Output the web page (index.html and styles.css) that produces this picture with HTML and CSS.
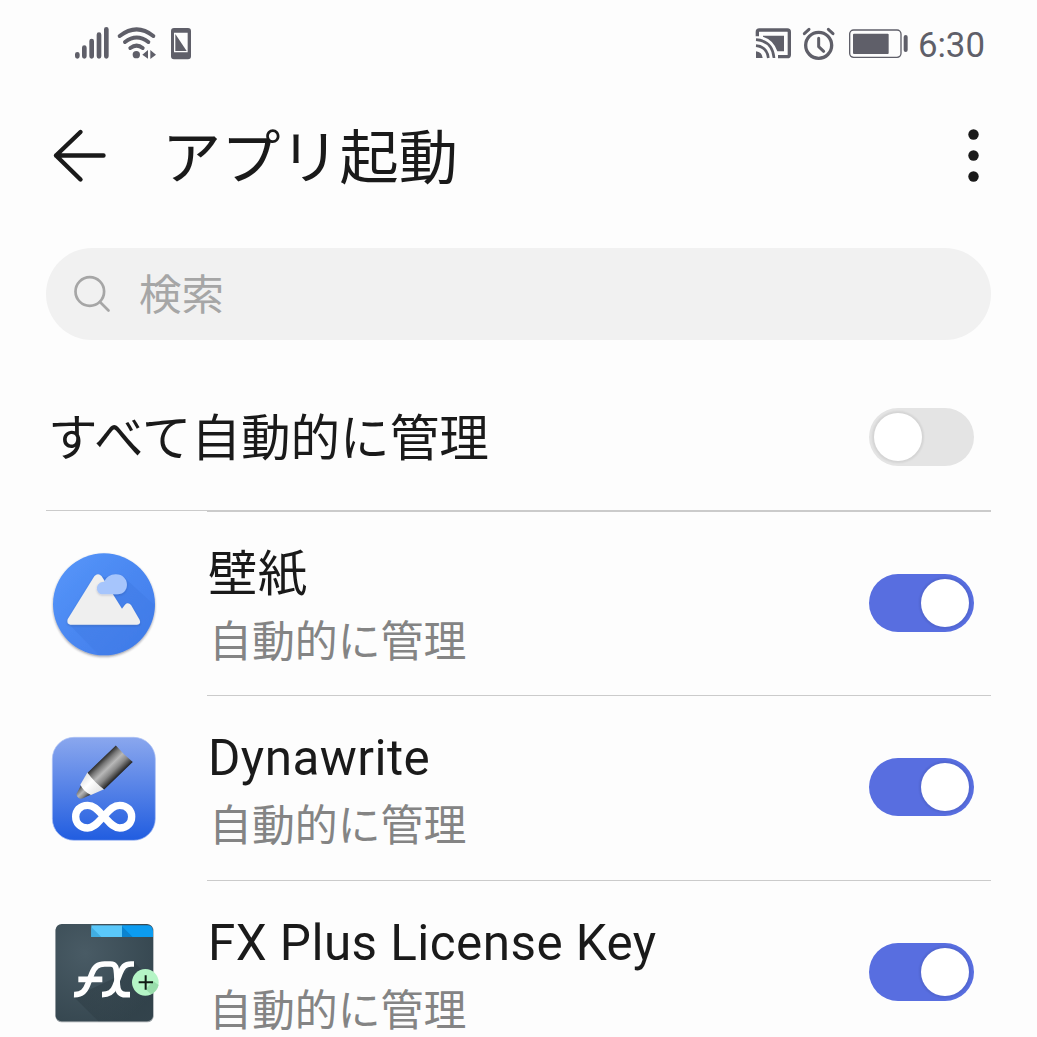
FILE: index.html
```html
<!DOCTYPE html>
<html lang="ja">
<head>
<meta charset="utf-8">
<title>アプリ起動</title>
<link rel="stylesheet" href="styles.css">
</head>
<body>
<div class="screen">
  <div class="status">
    <svg class="status-left" viewBox="0 0 450 180" fill="none" stroke="#5f5f69" stroke-linecap="round">
      <path stroke-width="14" d="M52 118v6M73 98v26M95 78v46M117 59v65M139 43v81"/>
      <path stroke-width="12" d="M179 63Q230 23 280 63M195 81Q230 54 265 81M211 99Q230 85 248 99"/>
      <circle cx="229" cy="119" r="11" fill="#5f5f69" stroke="none"/>
      <path fill="#5f5f69" stroke="none" d="M247 119l17-14v26zM271 105l17 14-17 13z"/>
      <path fill="#5f5f69" stroke="none" fill-rule="evenodd" d="M342 39h42q9 0 9 9v76q0 9-9 9h-42q-9 0-9-9V48q0-9 9-9zM342 53v59h41V53z"/>
      <path fill="#5f5f69" stroke="none" d="M346 57l34 51h-34z"/>
    </svg>
    <div class="status-right">
      <svg class="status-icons" viewBox="0 0 495 180" fill="none" stroke="#5f5f69">
        <path stroke-width="10" d="M40 64V51q0-6 6-6h84q6 0 6 6v68q0 6-6 6h-28"/>
        <path fill="#5f5f69" stroke="none" d="M57 62h63v47h-20Q89 75 57 65z"/>
        <path stroke-width="8" d="M36 74q50 4 54 55M36 92q33 3 37 37"/>
        <path fill="#5f5f69" stroke="none" d="M36 109q18 2 20 20H36z"/>
        <circle cx="224" cy="91" r="39" stroke-width="10"/>
        <path stroke-width="9" stroke-linecap="round" stroke-linejoin="round" d="M224 70v25l15 14M181 56l14-13M253 43l14 13"/>
        <rect x="317" y="45" width="154" height="82" rx="12" stroke-width="4"/>
        <rect x="327" y="56" width="107" height="61" rx="3" fill="#5f5f69" stroke="none"/>
        <path stroke-width="12" stroke-linecap="round" d="M485 66v39"/>
      </svg>
      <span class="clock">6:30</span>
    </div>
  </div>

  <header class="header">
    <svg class="back" viewBox="0 0 56 56" fill="none" stroke="#1a1a1a" stroke-width="4.4" stroke-linecap="round" stroke-linejoin="round"><path d="M52.500 27.500H5M29.500 4L5 27.500l24.500 24"/></svg>
    <h1 class="title">アプリ起動</h1>
    <svg class="more" viewBox="0 0 12 54" fill="#1a1a1a"><circle cx="5.500" cy="5.500" r="5.200"/><circle cx="5.500" cy="26.500" r="5.200"/><circle cx="5.500" cy="47.500" r="5.200"/></svg>
  </header>

  <div class="search">
    <svg class="glass" viewBox="0 0 40 40" fill="none" stroke="#a6a6a6" stroke-width="2.700" stroke-linecap="round"><circle cx="16.800" cy="17.500" r="14.300"/><path d="M27 28l8.500 8.500"/></svg>
    <span class="placeholder">検索</span>
  </div>

  <div class="all">
    <span class="all-label">すべて自動的に管理</span>
    <span class="switch"><span class="knob"></span></span>
  </div>

  <div class="list">
    <div class="row">
      <svg class="app" viewBox="0 0 390 390">
        <defs>
          <linearGradient id="sky" x1="0" y1="0" x2="1" y2="1"><stop offset="0" stop-color="#5797fa"/><stop offset=".5" stop-color="#4a87f1"/><stop offset="1" stop-color="#3f7bea"/></linearGradient>
          <linearGradient id="shade" x1="0" y1="0" x2="1" y2="1"><stop offset="0" stop-color="#2b62c9" stop-opacity=".25"/><stop offset="1" stop-color="#2b62c9" stop-opacity="0"/></linearGradient>
          <filter id="drop" x="-20%" y="-20%" width="140%" height="140%"><feDropShadow dx="0" dy="4" stdDeviation="3" flood-color="#223" flood-opacity=".45"/></filter>
          <filter id="soft" x="-20%" y="-20%" width="140%" height="140%"><feDropShadow dx="0" dy="3" stdDeviation="3" flood-color="#223" flood-opacity=".2"/></filter>
          <clipPath id="disc"><circle cx="192" cy="193" r="153"/></clipPath>
        </defs>
        <circle cx="192" cy="193" r="153" fill="url(#sky)" filter="url(#drop)"/>
        <g clip-path="url(#disc)"><path fill="url(#shade)" d="M84 250L220 390H400V246L252 112 170 110z"/></g>
        <path fill="#efefef" filter="url(#soft)" d="M163 109q11-13 22 0l61 97 9-12q9-9 18 1l26 45q5 13-8 14H91q-12-2-8-16z"/>
        <path fill="#a6c5fc" filter="url(#soft)" d="M188 163c-24-2-23-38 5-38 6-13 18-22 34-22 44 0 45 60 5 60z"/>
      </svg>
      <div class="texts"><span class="name">壁紙</span><span class="mode">自動的に管理</span></div>
      <span class="switch on"><span class="knob"></span></span>
    </div>

    <div class="row">
      <svg class="app" viewBox="0 0 390 390">
        <defs>
          <linearGradient id="tile" x1="0" y1="0" x2="0" y2="1"><stop offset="0" stop-color="#8aa7ee"/><stop offset="1" stop-color="#215de0"/></linearGradient>
          <linearGradient id="metal" x1="0" y1="0" x2="0" y2="1"><stop offset="0" stop-color="#2c2c2c"/><stop offset=".2" stop-color="#777"/><stop offset=".45" stop-color="#b8b8b8"/><stop offset=".7" stop-color="#888"/><stop offset="1" stop-color="#222"/></linearGradient>
          <linearGradient id="wood" x1="0" y1="0" x2="0" y2="1"><stop offset="0" stop-color="#e2e2e2"/><stop offset=".4" stop-color="#fff"/><stop offset="1" stop-color="#e2e2e2"/></linearGradient>
        </defs>
        <rect x="37" y="37" width="309" height="309" rx="65" fill="url(#tile)" stroke="#a9bff3" stroke-opacity=".7" stroke-width="3"/>
        <g transform="translate(118 217) rotate(-44)">
          <path fill="url(#metal)" d="M0-13Q-8 4 6 10l27 9v-43z"/>
          <path fill="url(#wood)" d="M28-25L70-37V34L30 19q-9-20-2-44z"/>
          <path fill="url(#metal)" d="M69-36H187q-2 34 2 71H70q-6-36-1-71z"/>
        </g>
        <path fill="none" stroke="#fff" stroke-width="22" d="M191 274C174 256 162 241 143 241c-48 0-48 68 0 68 19 0 31-17 48-35s29-33 48-33c48 0 48 68 0 68-19 0-31-17-48-35z"/>
      </svg>
      <div class="texts"><span class="name">Dynawrite</span><span class="mode">自動的に管理</span></div>
      <span class="switch on"><span class="knob"></span></span>
    </div>

    <div class="row">
      <svg class="app" viewBox="0 0 390 390">
        <defs>
          <radialGradient id="slate" cx=".3" cy=".3" r=".8"><stop offset="0" stop-color="#495b65"/><stop offset="1" stop-color="#35464f"/></radialGradient>
          <linearGradient id="cast" x1="0" y1="0" x2="1" y2="1"><stop offset="0" stop-color="#26343b" stop-opacity=".5"/><stop offset="1" stop-color="#26343b" stop-opacity=".15"/></linearGradient>
        </defs>
        <g transform="translate(0 2)">
        <rect x="46" y="45" width="295" height="293" rx="19" fill="#22303a" opacity=".45"/>
        <rect x="47" y="43" width="292" height="292" rx="18" fill="url(#slate)"/>
        <path fill="url(#cast)" d="M102 262L175 335H321q18 0 18-18V214L282 157 255 190z"/>
        <path fill="#5ac8fa" d="M154 47h92v35h-92z"/><path fill="#41aee3" d="M154 52l30 30h-30z"/>
        <path fill="#0c9cf0" d="M246 47h76q15 0 17 16v19h-93z"/><path fill="#0a83cf" d="M246 50l32 32h-32z"/>
        <g fill="none" stroke="#fff" stroke-width="17">
          <path d="M102 255c25 1 34-12 42-33l12-31c8-20 17-28 38-28h17c17 0 18 12 19 29l2 34c1 18 8 29 24 29h14"/>
          <path d="M115 209h72M282 163h-9c-19 0-26 10-33 28l-15 39c-7 18-18 25-39 25"/>
        </g>
        <circle cx="316" cy="218" r="40" fill="#b5f5c6"/>
        <path fill="#8bcf9d" d="M317 239l16 15q19-9 23-28l-17-12z" opacity=".65"/>
        <path stroke="#101c14" stroke-width="6" d="M296 218h43M317 197v43"/>
        </g>
      </svg>
      <div class="texts"><span class="name">FX Plus License Key</span><span class="mode">自動的に管理</span></div>
      <span class="switch on"><span class="knob"></span></span>
    </div>
  </div>
</div>
</body>
</html>
```
FILE: styles.css
```css
* { box-sizing: border-box; }
body {
  margin: 0;
  background: #fdfdfd;
  color: #1a1a1a;
  font-family: Roboto, "Noto Sans CJK JP", sans-serif;
}
.screen { height: 1037px; overflow: hidden; }
.status {
  display: flex;
  justify-content: space-between;
  height: 88px;
  padding: 15px 52px 0 60px;
}
.status-left { width: 150px; height: 60px; }
.status-right { display: flex; gap: 9px; }
.status-icons { width: 165px; height: 60px; }
.clock {
  font-size: 34.8px;
  line-height: 60px;
  color: #5f5f69;
}
.header {
  display: flex;
  align-items: center;
  height: 136px;
  padding: 0 57px 0 51px;
}
.back { width: 56px; height: 56px; }
.title {
  flex: 1;
  margin: 0 0 0 55px;
  padding-top: 5px;
  font-size: 59.2px;
  font-weight: 400;
  line-height: 80px;
}
.more { width: 12px; height: 54px; }
.search {
  display: flex;
  align-items: center;
  height: 92px;
  margin: 24px 46px 0;
  padding-left: 27px;
  border-radius: 46px;
  background: #f1f1f1;
}
.glass { width: 40px; height: 40px; }
.placeholder {
  margin-left: 26px;
  padding-top: 4px;
  font-size: 42.5px;
  line-height: 60px;
  color: #a6a6a6;
}
.all {
  display: flex;
  align-items: center;
  justify-content: space-between;
  height: 171px;
  margin: 0 46px;
  padding: 23px 17px 0 2px;
  border-bottom: 1px solid #cbcbcb;
}
.all-label {
  padding-top: 4px;
  font-size: 49.6px;
  line-height: 70px;
}
.switch {
  display: flex;
  width: 105px;
  height: 58px;
  padding: 5px;
  border-radius: 29px;
  background: #e4e4e4;
}
.knob {
  width: 48px;
  height: 48px;
  border-radius: 50%;
  background: #fff;
  box-shadow: 0 0 2px 2px rgba(0, 0, 0, .07);
}
.switch.on { justify-content: flex-end; background: #586ee0; }
.row {
  display: grid;
  grid-template-columns: 167px 1fr 105px;
  height: 184.4px;
  padding: 0 63px 0 40px;
  background: linear-gradient(#cbcbcb, #cbcbcb) 207px 0 / 784px 1px no-repeat;
}
.app { width: 130px; height: 130px; margin-top: 29.3px; }
.texts {
  display: flex;
  flex-direction: column;
  padding: 28px 0 0 1px;
}
.name {
  font-size: 49.4px;
  line-height: 70px;
  letter-spacing: .45px;
}
.mode {
  padding-left: 1px;
  font-size: 42.9px;
  line-height: 66px;
  color: #848484;
}
.row .switch { margin-top: 63px; }
```
